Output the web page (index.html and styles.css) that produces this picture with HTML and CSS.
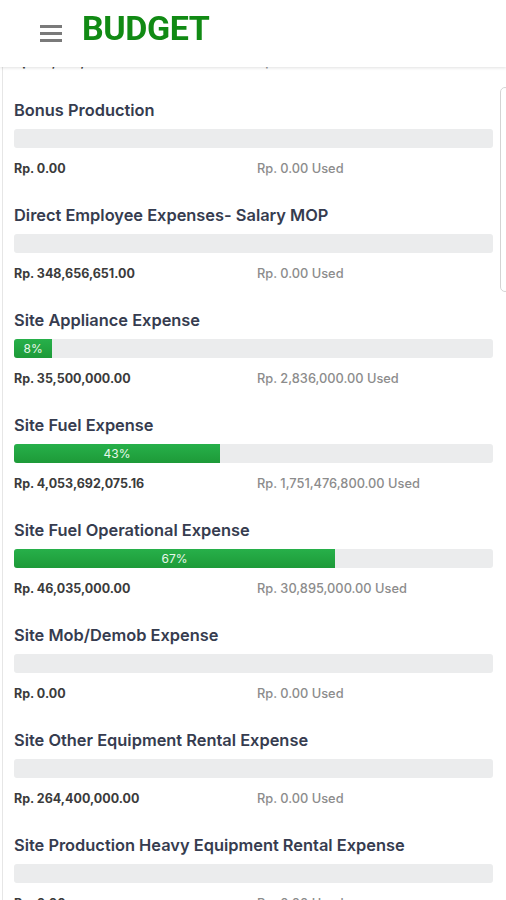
FILE: index.html
```html
<!DOCTYPE html>
<html lang="en">
<head>
    <meta charset="UTF-8">
    <meta name="viewport" content="width=device-width, initial-scale=1.0">
    <title>Budget</title>
    <link rel="stylesheet" href="styles.css">
</head>
<body>

    <header class="topbar">
        <button class="menu-btn" aria-label="Menu">
            <span></span><span></span><span></span>
        </button>
        <h1 class="brand">BUDGET</h1>
    </header>

    <div class="scroll-thumb" aria-hidden="true"></div>

    <main class="budget-list">
        <div class="amounts partial">
            <span class="total">Rp. 75,000,000.00</span>
            <span class="used">Rp. 0.00 Used</span>
        </div>

        <section class="budget-item">
            <h2>Bonus Production</h2>
            <div class="bar"></div>
            <div class="amounts">
                <span class="total">Rp. 0.00</span>
                <span class="used">Rp. 0.00 Used</span>
            </div>
        </section>

        <section class="budget-item">
            <h2>Direct Employee Expenses- Salary MOP</h2>
            <div class="bar"></div>
            <div class="amounts">
                <span class="total">Rp. 348,656,651.00</span>
                <span class="used">Rp. 0.00 Used</span>
            </div>
        </section>

        <section class="budget-item">
            <h2>Site Appliance Expense</h2>
            <div class="bar"><div class="fill" style="width: 8%">8%</div></div>
            <div class="amounts">
                <span class="total">Rp. 35,500,000.00</span>
                <span class="used">Rp. 2,836,000.00 Used</span>
            </div>
        </section>

        <section class="budget-item">
            <h2>Site Fuel Expense</h2>
            <div class="bar"><div class="fill" style="width: 43%">43%</div></div>
            <div class="amounts">
                <span class="total">Rp. 4,053,692,075.16</span>
                <span class="used">Rp. 1,751,476,800.00 Used</span>
            </div>
        </section>

        <section class="budget-item">
            <h2>Site Fuel Operational Expense</h2>
            <div class="bar"><div class="fill" style="width: 67%">67%</div></div>
            <div class="amounts">
                <span class="total">Rp. 46,035,000.00</span>
                <span class="used">Rp. 30,895,000.00 Used</span>
            </div>
        </section>

        <section class="budget-item">
            <h2>Site Mob/Demob Expense</h2>
            <div class="bar"></div>
            <div class="amounts">
                <span class="total">Rp. 0.00</span>
                <span class="used">Rp. 0.00 Used</span>
            </div>
        </section>

        <section class="budget-item">
            <h2>Site Other Equipment Rental Expense</h2>
            <div class="bar"></div>
            <div class="amounts">
                <span class="total">Rp. 264,400,000.00</span>
                <span class="used">Rp. 0.00 Used</span>
            </div>
        </section>

        <section class="budget-item">
            <h2>Site Production Heavy Equipment Rental Expense</h2>
            <div class="bar"></div>
            <div class="amounts">
                <span class="total">Rp. 0.00</span>
                <span class="used">Rp. 0.00 Used</span>
            </div>
        </section>
    </main>

</body>
</html>
```

FILE: styles.css
```css
body {
    font-family: Inter, 'Liberation Sans', sans-serif;
    background: #fff;
    margin: 0;
    height: 900px;
    overflow: hidden;
}

.topbar {
    position: fixed;
    top: 0;
    left: 0;
    right: 0;
    height: 67px;
    background: #fff;
    box-shadow: 0 1px 3px rgba(0, 0, 0, 0.12);
    display: flex;
    align-items: flex-start;
    padding-left: 40px;
    gap: 20px;
    z-index: 2;
}

.menu-btn {
    display: flex;
    flex-direction: column;
    gap: 4px;
    width: 22px;
    padding: 0;
    margin-top: 25px;
    border: none;
    background: none;
}

.menu-btn span {
    display: block;
    height: 3px;
    background: #7a7a7a;
}

.brand {
    margin: 6px 0 0;
    font-family: Roboto, 'Liberation Sans', sans-serif;
    font-size: 34px;
    line-height: 44px;
    font-weight: 700;
    color: #118a14;
    letter-spacing: -0.4px;
}

.scroll-thumb {
    position: fixed;
    top: 87px;
    right: -4px;
    width: 8px;
    height: 203px;
    border: 1px solid #d4d4d4;
    border-radius: 5px;
    z-index: 1;
}

.budget-list {
    margin-left: 2px;
    border-left: 1px solid #e6e6e6;
    padding: 54px 13px 0 11px;
}

.budget-item h2 {
    margin: 0;
    font-size: 16.4px;
    line-height: 20px;
    font-weight: 600;
    color: #363c4f;
}

.bar {
    margin-top: 9px;
    height: 19px;
    background: #ebeced;
    border-radius: 3px;
    overflow: hidden;
}

.fill {
    height: 100%;
    background: linear-gradient(180deg, #27b04a, #1d9a38);
    color: #e8f8ea;
    font-size: 12px;
    line-height: 19px;
    text-align: center;
}

.amounts {
    display: grid;
    grid-template-columns: 243px 1fr;
    margin-top: 13px;
    margin-bottom: 28px;
    font-size: 12.5px;
    line-height: 16px;
}

.amounts.partial {
    margin-top: 0;
    margin-bottom: 30px;
}

.total {
    font-weight: 700;
    color: #3b3b3b;
}

.used {
    font-weight: 500;
    font-size: 12.8px;
    color: #8c8c8c;
}
```
